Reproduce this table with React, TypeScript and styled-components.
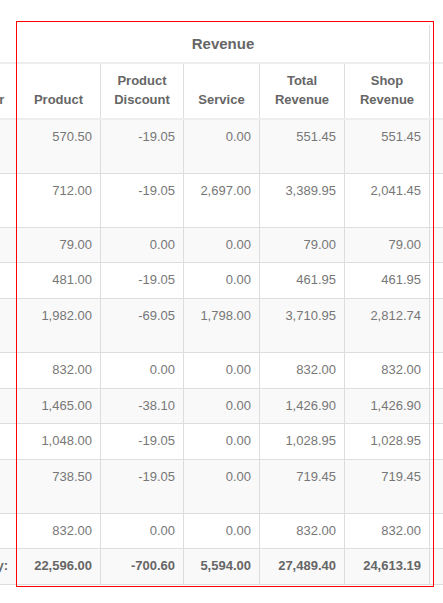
import React from "react";
import styled, { createGlobalStyle } from "styled-components";

const Global = createGlobalStyle`
  html, body { margin: 0; padding: 0; background: #ffffff; }
  body { font-family: "Liberation Sans", Arial, Helvetica, sans-serif; }
`;

const Viewport = styled.div`
  position: relative;
  width: 443px;
  height: 603px;
  overflow: hidden;
  padding-top: 25px;
  box-sizing: border-box;
`;

const Table = styled.table`
  border-collapse: collapse;
  table-layout: fixed;
  width: 648px;
  margin-left: -69px;
  font-size: 13px;
  line-height: 1.42857;
  color: #777777;
  background: #ffffff;
`;

const GroupRow = styled.tr`
  & > th {
    border-top: 0;
    font-size: 15px;
    padding: 8px;
  }
`;

const HeadCell = styled.th<{ $blank?: boolean }>`
  padding: 8px;
  font-weight: bold;
  color: #666666;
  text-align: center;
  vertical-align: bottom;
  border-left: ${(p) => (p.$blank ? "0" : "1px solid #dddddd")};
  border-right: ${(p) => (p.$blank ? "0" : "1px solid #dddddd")};
  border-top: 1px solid #dddddd;
  border-bottom: 2px solid #eeeeee;
  background: #ffffff;
`;

const BodyRow = styled.tr`
  &:nth-child(odd) > td {
    background: #f9f9f9;
  }
`;

const Cell = styled.td<{ $tall?: boolean; $total?: boolean }>`
  padding: 8px 8px ${(p) => (p.$tall ? "26.57px" : "8px")} 8px;
  text-align: right;
  vertical-align: top;
  border: 1px solid #dddddd;
  white-space: nowrap;
  font-weight: ${(p) => (p.$total ? "bold" : "normal")};
  color: ${(p) => (p.$total ? "#666666" : "#777777")};
`;

const Overlay = styled.div`
  position: absolute;
  left: 16px;
  top: 21px;
  width: 418px;
  height: 566px;
  border: 1px solid #ff0000;
  box-sizing: border-box;
  pointer-events: none;
`;

type Row = { v: string[]; tall?: boolean };

const rows: Row[] = [
  { v: ["570.50", "-19.05", "0.00", "551.45", "551.45"], tall: true },
  { v: ["712.00", "-19.05", "2,697.00", "3,389.95", "2,041.45"], tall: true },
  { v: ["79.00", "0.00", "0.00", "79.00", "79.00"] },
  { v: ["481.00", "-19.05", "0.00", "461.95", "461.95"] },
  { v: ["1,982.00", "-69.05", "1,798.00", "3,710.95", "2,812.74"], tall: true },
  { v: ["832.00", "0.00", "0.00", "832.00", "832.00"] },
  { v: ["1,465.00", "-38.10", "0.00", "1,426.90", "1,426.90"] },
  { v: ["1,048.00", "-19.05", "0.00", "1,028.95", "1,028.95"] },
  { v: ["738.50", "-19.05", "0.00", "719.45", "719.45"], tall: true },
  { v: ["832.00", "0.00", "0.00", "832.00", "832.00"] },
];

const totals = ["22,596.00", "-700.60", "5,594.00", "27,489.40", "24,613.19"];

const widths = [85, 84, 83, 76, 85, 85, 150];

export default function App() {
  return (
    <Viewport>
      <Global />
      <Table>
        <colgroup>
          {widths.map((w, i) => (
            <col key={i} style={{ width: w }} />
          ))}
        </colgroup>
        <thead>
          <GroupRow>
            <HeadCell $blank />
            <HeadCell colSpan={5}>Revenue</HeadCell>
            <HeadCell />
          </GroupRow>
          <tr>
            <HeadCell>Customer</HeadCell>
            <HeadCell>Product</HeadCell>
            <HeadCell>Product Discount</HeadCell>
            <HeadCell>Service</HeadCell>
            <HeadCell>Total Revenue</HeadCell>
            <HeadCell>Shop Revenue</HeadCell>
            <HeadCell />
          </tr>
        </thead>
        <tbody>
          {rows.map((r, i) => (
            <BodyRow key={i}>
              <Cell $tall={r.tall} />
              {r.v.map((x, j) => (
                <Cell key={j} $tall={r.tall}>
                  {x}
                </Cell>
              ))}
              <Cell $tall={r.tall} />
            </BodyRow>
          ))}
          <BodyRow>
            <Cell $total>Summary:</Cell>
            {totals.map((x, j) => (
              <Cell key={j} $total>
                {x}
              </Cell>
            ))}
            <Cell $total />
          </BodyRow>
        </tbody>
      </Table>
      <Overlay />
    </Viewport>
  );
}
